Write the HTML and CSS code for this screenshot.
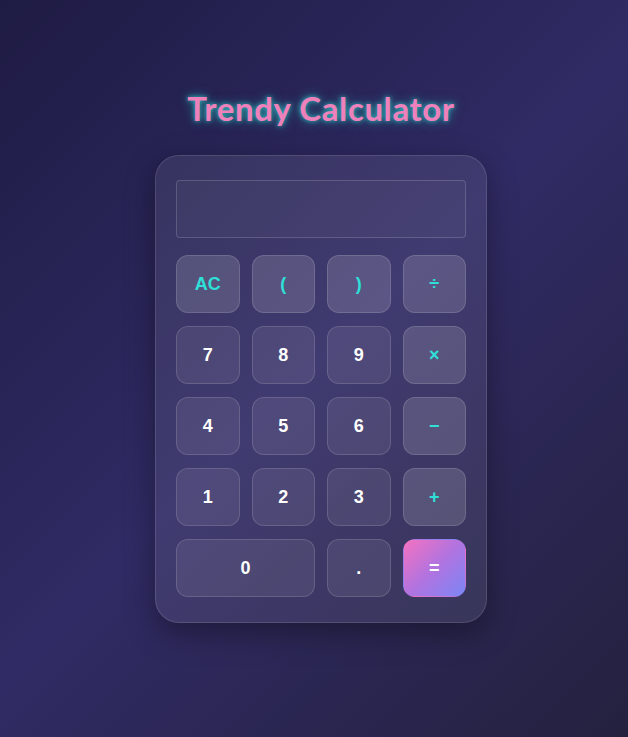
FILE: index.html
```html
<!DOCTYPE html>
<html lang="en">
<head>
<meta charset="utf-8">
<title>Trendy Calculator</title>
<link rel="stylesheet" href="styles.css">
</head>
<body>
  <main class="page">
    <h1 class="title">Trendy Calculator</h1>
    <div class="calculator">
      <div class="display"></div>
      <div class="keys">
        <button class="key op">AC</button>
        <button class="key op">(</button>
        <button class="key op">)</button>
        <button class="key op">÷</button>
        <button class="key">7</button>
        <button class="key">8</button>
        <button class="key">9</button>
        <button class="key op">×</button>
        <button class="key">4</button>
        <button class="key">5</button>
        <button class="key">6</button>
        <button class="key op">−</button>
        <button class="key">1</button>
        <button class="key">2</button>
        <button class="key">3</button>
        <button class="key op">+</button>
        <button class="key wide">0</button>
        <button class="key">.</button>
        <button class="key equals">=</button>
      </div>
    </div>
  </main>
</body>
</html>
```

FILE: styles.css
```css
* { box-sizing: border-box; }

html, body {
  margin: 0;
  height: 100%;
}

body {
  background: linear-gradient(135deg, #1e1b44 0%, #302b64 50%, #24213f 100%);
  font-family: "Liberation Sans", Arial, sans-serif;
}

.page {
  display: flex;
  flex-direction: column;
  align-items: center;
  padding: 89px 0 0 14px;
}

.title {
  margin: 0 0 27px;
  font-family: "Lato", "Liberation Sans", sans-serif;
  font-weight: 700;
  font-size: 33px;
  line-height: 39px;
  color: #ee80bb;
  text-shadow: 0 0 5px rgba(45, 226, 214, 0.8), 0 0 12px rgba(45, 226, 214, 0.5);
  letter-spacing: 0.6px;
}

.calculator {
  width: 332px;
  padding: 24px 20px 25px;
  border-radius: 24px;
  background: rgba(255, 255, 255, 0.08);
  border: 1px solid rgba(255, 255, 255, 0.12);
  box-shadow: 0 10px 30px rgba(0, 0, 0, 0.35);
}

.display {
  height: 58px;
  border-radius: 4px;
  border: 1px solid rgba(255, 255, 255, 0.16);
  background: rgba(255, 255, 255, 0.03);
  margin-bottom: 17px;
}

.keys {
  display: grid;
  grid-template-columns: repeat(4, 1fr);
  grid-auto-rows: 58px;
  gap: 13px 12px;
}

.key {
  border: 1px solid rgba(255, 255, 255, 0.14);
  border-radius: 12px;
  background: rgba(255, 255, 255, 0.08);
  color: #ffffff;
  font-family: "Liberation Sans", Arial, sans-serif;
  font-weight: 700;
  font-size: 18px;
  padding: 0;
  display: flex;
  align-items: center;
  justify-content: center;
}

.key.op {
  background: rgba(255, 255, 255, 0.14);
  color: #2ee0d8;
}

.key.wide {
  grid-column: span 2;
}

.key.equals {
  border-color: transparent;
  background: linear-gradient(135deg, #f472c0 0%, #b173e0 50%, #7c86f5 100%);
  color: #ffffff;
}
```
